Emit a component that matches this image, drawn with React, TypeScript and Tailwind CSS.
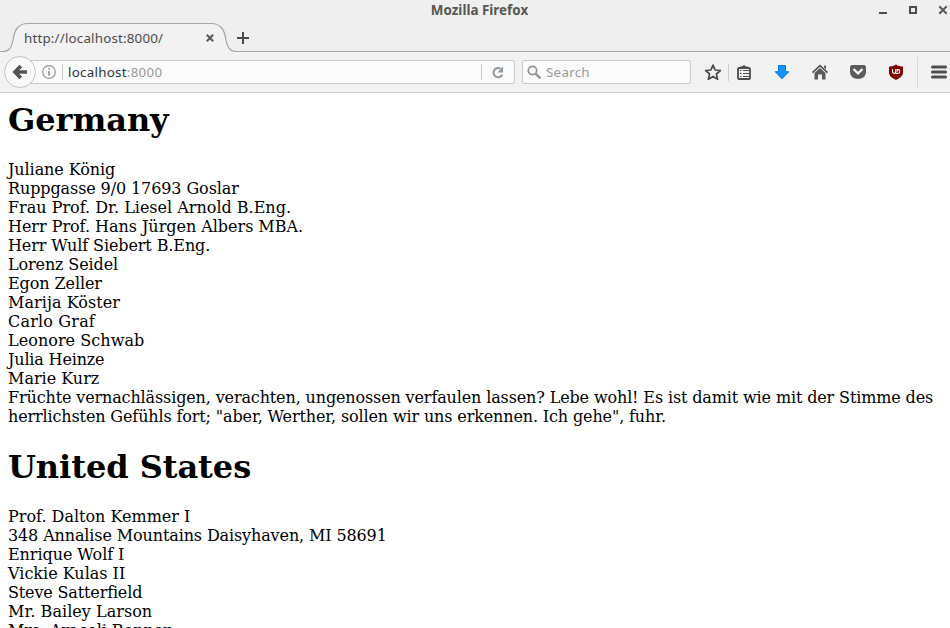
import React from "react";

type Line = { text: string; spacing: string };

const germany: Line[] = [
  { text: "Juliane König", spacing: "tracking-[-0.08px]" },
  { text: "Ruppgasse 9/0 17693 Goslar", spacing: "tracking-[-0.1px]" },
  { text: "Frau Prof. Dr. Liesel Arnold B.Eng.", spacing: "tracking-normal" },
  { text: "Herr Prof. Hans Jürgen Albers MBA.", spacing: "tracking-[-0.03px]" },
  { text: "Herr Wulf Siebert B.Eng.", spacing: "tracking-[-0.1px]" },
  { text: "Lorenz Seidel", spacing: "tracking-[-0.12px]" },
  { text: "Egon Zeller", spacing: "tracking-[-0.09px]" },
  { text: "Marija Köster", spacing: "tracking-[0.06px]" },
  { text: "Carlo Graf", spacing: "tracking-[0.18px]" },
  { text: "Leonore Schwab", spacing: "tracking-[0.05px]" },
  { text: "Julia Heinze", spacing: "tracking-[-0.16px]" },
  { text: "Marie Kurz", spacing: "tracking-normal" },
  {
    text: 'Früchte vernachlässigen, verachten, ungenossen verfaulen lassen? Lebe wohl! Es ist damit wie mit der Stimme des herrlichsten Gefühls fort; "aber, Werther, sollen wir uns erkennen. Ich gehe", fuhr.',
    spacing: "tracking-[-0.132px]",
  },
];

const unitedStates: Line[] = [
  { text: "Prof. Dalton Kemmer I", spacing: "tracking-normal" },
  { text: "348 Annalise Mountains Daisyhaven, MI 58691", spacing: "tracking-[-0.12px]" },
  { text: "Enrique Wolf I", spacing: "tracking-[-0.07px]" },
  { text: "Vickie Kulas II", spacing: "tracking-normal" },
  { text: "Steve Satterfield", spacing: "tracking-[-0.15px]" },
  { text: "Mr. Bailey Larson", spacing: "tracking-[0.04px]" },
  { text: "Mrs. Araceli Renner", spacing: "tracking-[-0.08px]" },
];

function TitleBar() {
  return (
    <div className="relative flex h-[22px] shrink-0 items-center justify-end">
      <div className="absolute inset-x-0 top-0 pl-[9px] text-center text-[13.4px] leading-[21px] font-bold text-[#555753]">
        <span className="tracking-[0.02px]">Mozilla Firefox</span>
      </div>
      <svg width="72" height="22" viewBox="878 0 72 22" fill="none">
        <path d="M879 13h8" stroke="#4c4c4c" strokeWidth="2" />
        <rect x="910" y="7" width="6" height="6" stroke="#4c4c4c" strokeWidth="2" />
        <path d="M939.3 6.3l7.4 7.4M946.7 6.3l-7.4 7.4" stroke="#5a5a5a" strokeWidth="2" />
      </svg>
    </div>
  );
}

function TabStrip() {
  return (
    <div className="relative flex h-[30px] shrink-0 items-center">
      <svg className="absolute left-0 top-0" width="950" height="30" viewBox="0 22 950 30" fill="none">
        <path
          d="M0 51.5H3C9 51.5 11.5 48 13 40C14.5 30 18 23.5 28 23.5H211C221 23.5 224.5 30 226 40C227.5 48 230 51.5 237 51.5H950V52H0Z"
          fill="#f2f2f2"
        />
        <path
          d="M0 51.5H3C9 51.5 11.5 48 13 40C14.5 30 18 23.5 28 23.5H211C221 23.5 224.5 30 226 40C227.5 48 230 51.5 237 51.5H950"
          stroke="#a3a7a9"
          strokeWidth="1.2"
        />
      </svg>
      <span className="relative ml-6 mt-[2px] w-[182px] text-[13.4px] leading-5 tracking-[0.17px] text-[#4b4b4b]">
        http://localhost:8000/
      </span>
      <svg className="relative mt-[2px]" width="46" height="16" viewBox="206 30 46 16" fill="none">
        <path d="M206.8 34.8l6.4 6.4M213.2 34.8l-6.4 6.4" stroke="#5a5a5a" strokeWidth="2.1" />
        <path d="M237 38h12M243 32v12" stroke="#4a4a4a" strokeWidth="2" />
      </svg>
    </div>
  );
}

function AddressBar() {
  return (
    <div className="flex w-[515px] items-center">
      <div className="z-10 ml-1 flex size-8 shrink-0 items-center justify-center rounded-full border border-[#c3c3c3] bg-[#f9f9f9]">
        <svg width="16" height="16" viewBox="0 0 16 16" fill="none">
          <path d="M8.8 2L3 8l5.8 6M3.5 8H15" stroke="#555" strokeWidth="3.7" />
        </svg>
      </div>
      <div className="-ml-1.5 flex h-6 flex-1 items-center rounded-r-[2px] border border-[#c9c9c9] bg-[#fbfbfb] pl-[10px]">
        <svg width="16" height="16" viewBox="0 0 16 16" fill="none">
          <circle cx="8" cy="8" r="6.4" stroke="#929292" strokeWidth="1.1" />
          <path d="M8 7v4.5M8 4.2v1.6" stroke="#858585" strokeWidth="1.5" />
        </svg>
        <span className="ml-[5px] h-4 w-px bg-[#c8c8c8]" />
        <span className="ml-[5px] text-[13.4px] leading-5 tracking-[0.25px] text-[#2e3436]">
          localhost<span className="text-[#999]">:8000</span>
        </span>
        <span className="ml-auto h-4 w-px bg-[#c9c9c9]" />
        <svg className="mx-2 mt-px" width="16" height="16" viewBox="0 0 16 16" fill="none">
          <path d="M10.6 3.7A4.6 4.6 0 1 0 12.2 9.8" stroke="#929ca3" strokeWidth="2.1" />
          <path d="M13 1.5v6H7.3z" fill="#929ca3" />
        </svg>
      </div>
    </div>
  );
}

function ToolbarIcons() {
  return (
    <svg width="259" height="40" viewBox="691 52 259 40" fill="none">
      <path
        d="M713 65.1l2.1 4.9 5.3.5-4 3.5 1.2 5.2-4.6-2.8-4.6 2.8 1.2-5.2-4-3.5 5.3-.5z"
        stroke="#4c4c4c"
        strokeWidth="1.7"
        strokeLinejoin="round"
      />
      <path d="M728.5 64v17" stroke="#cdcdcd" />
      <rect x="738" y="68" width="12" height="11" rx="1" stroke="#4c4c4c" strokeWidth="1.8" />
      <path d="M740 68v-1.5h2.3a1.8 1.8 0 0 1 3.4 0h2.3V68z" fill="#4c4c4c" />
      <path d="M740 70.5h1.5M743 70.5h6M740 73.5h1.5M743 73.5h6M740 76.5h1.5M743 76.5h6" stroke="#4c4c4c" strokeWidth="1" />
      <path
        d="M778.5 65.5h7v6.2h3.3L782 78.8l-6.8-7.1h3.3z"
        fill="#1793ff"
        stroke="#087bdd"
        strokeLinejoin="round"
      />
      <path d="M812.5 72.7L820 65.7l7.5 7" stroke="#505050" strokeWidth="1.6" />
      <path d="M824 65.5h2v4l-2-2zM814.5 73l5.5-5 5.5 5v6.5H822v-5h-4v5h-3.5z" fill="#5b5b5b" />
      <path d="M851.5 65h13l1.5 1.5V72c0 9.2-16 9.2-16 0v-5.5z" fill="#5b5b5b" />
      <path d="M853.5 69l4.5 4.3 4.5-4.3" stroke="#f3f3f3" strokeWidth="2.3" />
      <path d="M896 64.5c2 1.4 4.2 2 7 2v5.8c0 4-3.2 6-7 7.7-3.8-1.7-7-3.7-7-7.7v-5.8c2.8 0 5-.6 7-2z" fill="#800000" />
      <path
        d="M892.5 69v2.8a1.6 1.6 0 0 0 3.2 0V69M895.7 73.4h2.2a1.9 1.9 0 0 0 0-3.8h-.7v2.2"
        stroke="#fff"
        strokeWidth="1.1"
      />
      <path d="M917.5 57v31" stroke="#d9d9d9" />
      <path d="M932.5 67h13M932.5 72h13M932.5 77h13" stroke="#4e4e4e" strokeWidth="3" strokeLinecap="round" />
    </svg>
  );
}

function Toolbar() {
  return (
    <div className="flex h-[41px] shrink-0 items-center border-b border-[#c9c9c9] bg-[#f2f2f2]">
      <AddressBar />
      <div className="ml-[7px] flex h-6 w-[169px] shrink-0 items-center rounded-[2px] border border-[#c9c9c9] bg-[#fbfbfb] pl-1">
        <svg width="15" height="15" viewBox="0 0 15 15" fill="none">
          <circle cx="5.5" cy="5.5" r="4.2" stroke="#929292" strokeWidth="1.8" />
          <path d="M8.6 8.6l4.8 4.8" stroke="#929292" strokeWidth="2.3" />
        </svg>
        <span className="ml-1 text-[13.4px] leading-5 tracking-[0.25px] text-[#999]">Search</span>
      </div>
      <ToolbarIcons />
    </div>
  );
}

function Country({ name, lines }: { name: string; lines: Line[] }) {
  return (
    <section>
      <h1 className="text-[32px] leading-[38px] font-bold tracking-[-0.05px]">{name}</h1>
      <div className="mt-[21px] mb-[22px] text-base leading-[19px]">
        {lines.map(({ text, spacing }) => (
          <div key={text} className={spacing}>
            {text}
          </div>
        ))}
      </div>
    </section>
  );
}

export default function App() {
  return (
    <div className="flex h-[628px] w-[950px] flex-col overflow-hidden bg-[#efefef] font-['Noto_Sans','Open_Sans',sans-serif]">
      <TitleBar />
      <TabStrip />
      <Toolbar />
      <main className="min-h-0 flex-1 overflow-hidden bg-white px-2 pt-2 font-['DejaVu_Serif',serif] text-black">
        <Country name="Germany" lines={germany} />
        <Country name="United States" lines={unitedStates} />
      </main>
    </div>
  );
}
